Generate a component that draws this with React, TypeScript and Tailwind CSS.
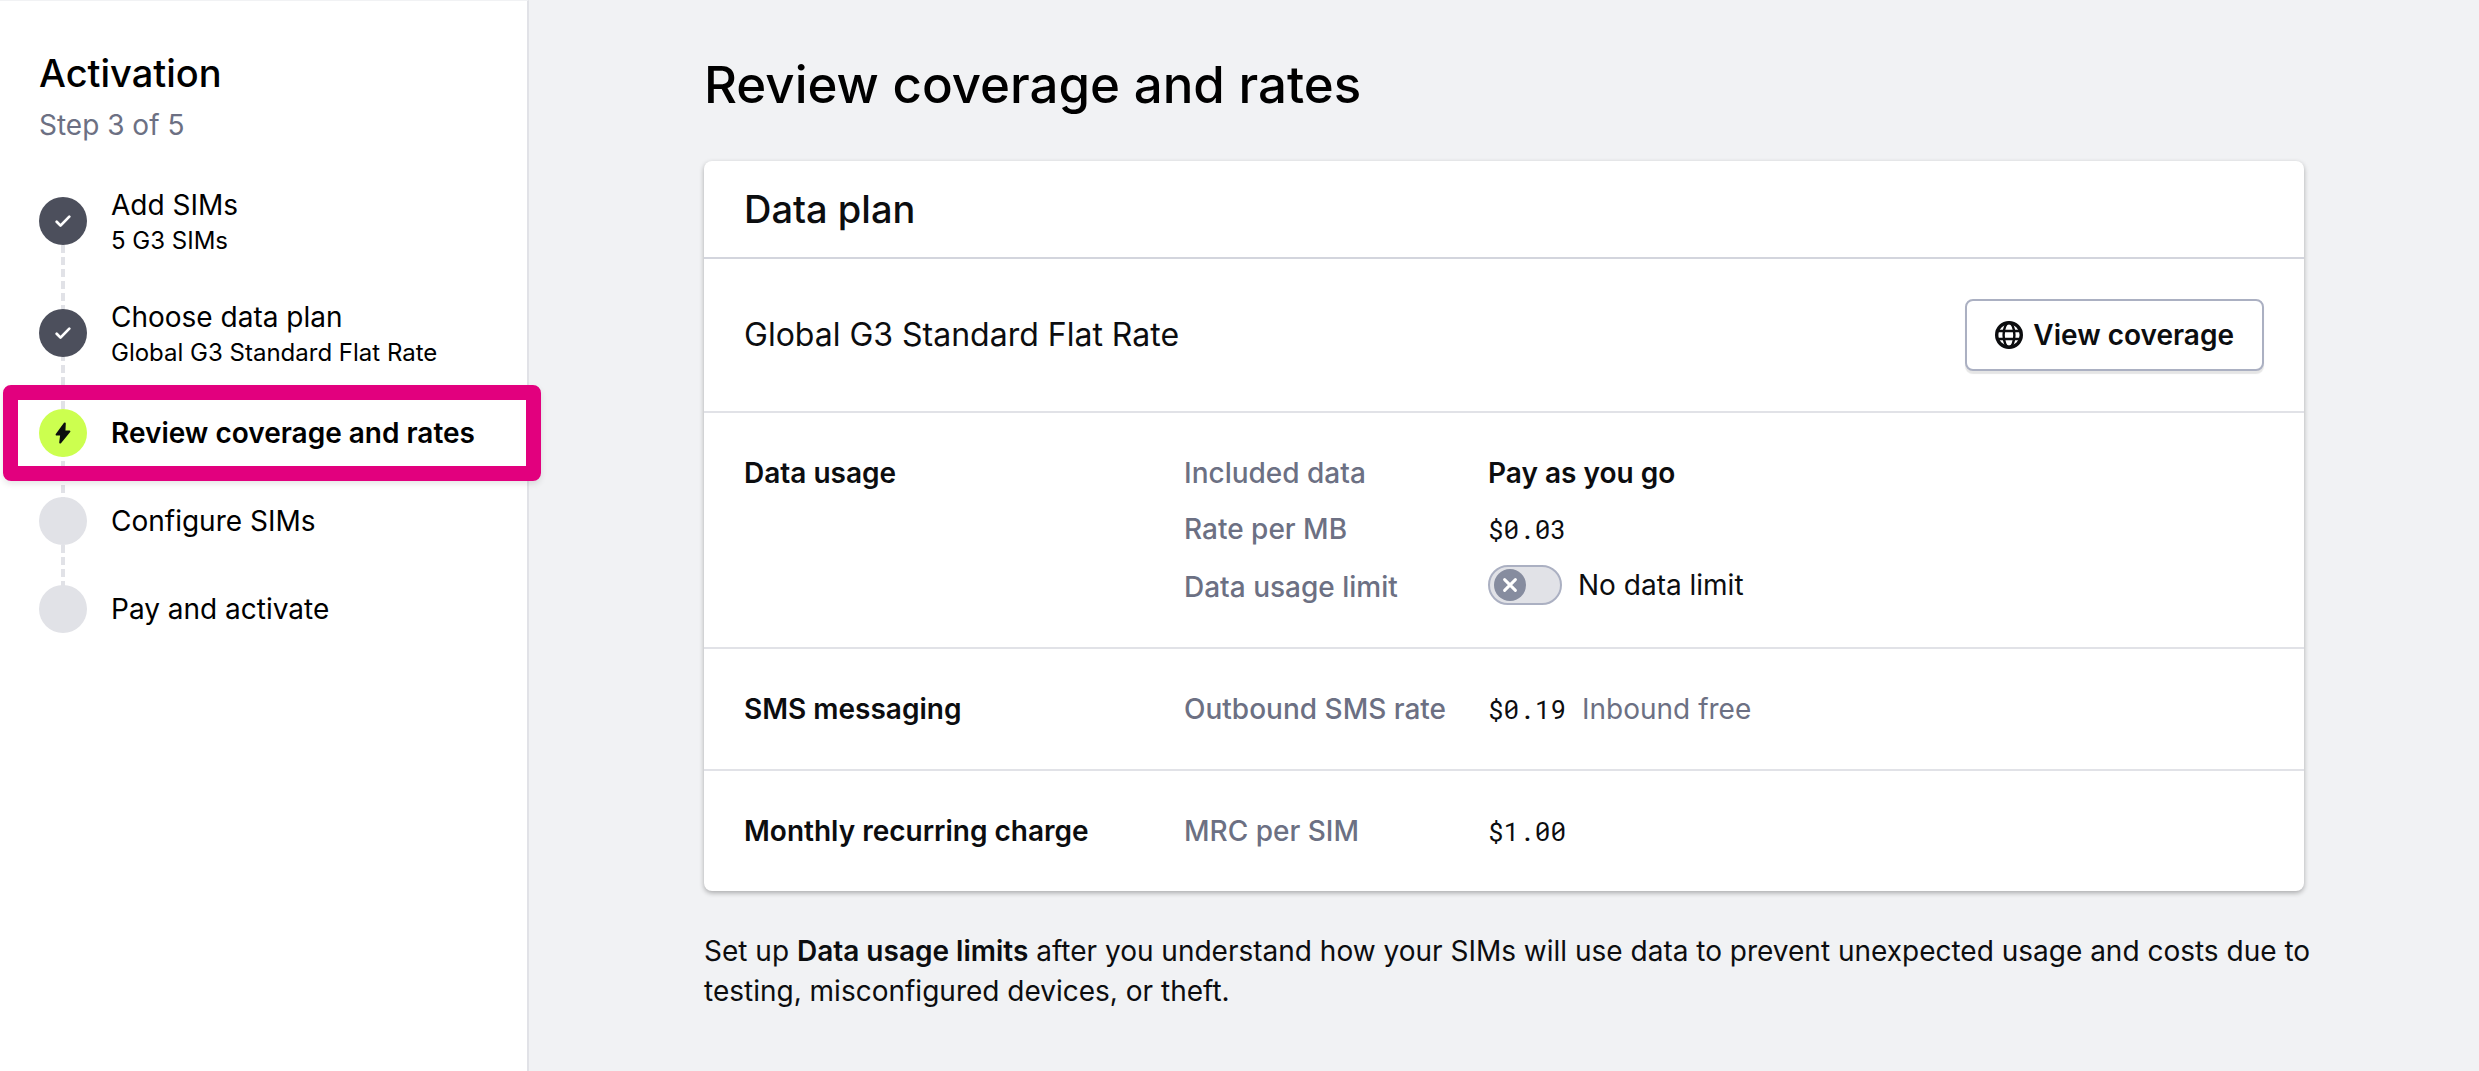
import React from "react";

type StepState = "done" | "current" | "upcoming";

type Step = {
  title: string;
  detail?: string;
  state: StepState;
};

const steps: Step[] = [
  { title: "Add SIMs", detail: "5 G3 SIMs", state: "done" },
  { title: "Choose data plan", detail: "Global G3 Standard Flat Rate", state: "done" },
  { title: "Review coverage and rates", state: "current" },
  { title: "Configure SIMs", state: "upcoming" },
  { title: "Pay and activate", state: "upcoming" },
];

function CheckIcon() {
  return (
    <svg viewBox="0 0 16 16" className="size-4" fill="none" stroke="currentColor" strokeWidth="2.7" strokeLinecap="round" strokeLinejoin="round" aria-hidden="true">
      <path d="M1.7 8.8 5.5 12.6 14.3 3.6" />
    </svg>
  );
}

function BoltIcon() {
  return (
    <svg viewBox="0 0 16 24" className="h-6 w-4" fill="currentColor" stroke="currentColor" strokeWidth="2" strokeLinejoin="round" aria-hidden="true">
      <path d="M9.8 2.4 1.6 13.6H6.2L5.2 21.6 14.4 10.4H9.4Z" />
    </svg>
  );
}

function GlobeIcon() {
  return (
    <svg viewBox="0 0 28 28" className="size-7" fill="none" stroke="currentColor" aria-hidden="true">
      <circle cx="14" cy="14" r="12.3" strokeWidth="3.4" />
      <ellipse cx="14" cy="14" rx="5.4" ry="12.3" strokeWidth="2.4" />
      <path d="M2.5 10H25.5M2.5 18H25.5" strokeWidth="2.4" />
    </svg>
  );
}

function StepMarker({ state }: { state: StepState }) {
  if (state === "done") {
    return (
      <span className="flex size-12 shrink-0 items-center justify-center rounded-full bg-[#4c4f5c] text-white">
        <CheckIcon />
      </span>
    );
  }
  if (state === "current") {
    return (
      <span className="flex size-12 shrink-0 items-center justify-center rounded-full bg-[#ccff4f] text-[#0c0d0f]">
        <BoltIcon />
      </span>
    );
  }
  return <span className="size-12 shrink-0 rounded-full bg-[#e1e2e7]" />;
}

function StepItem({ step }: { step: Step }) {
  const current = step.state === "current";
  return (
    <li
      aria-current={current ? "step" : undefined}
      className={step.detail ? "relative flex h-20 items-center gap-6" : "relative flex h-14 items-center gap-6"}
    >
      <StepMarker state={step.state} />
      <div className="whitespace-nowrap">
        <div className={current ? "text-[28px] leading-10 font-semibold" : "text-[28px] leading-10"}>{step.title}</div>
        {step.detail && <div className="text-2xl leading-8">{step.detail}</div>}
      </div>
      {current && (
        <div className="pointer-events-none absolute -inset-y-5 -right-[53px] -left-9 rounded-lg border-[15px] border-[#e2007e] shadow-[0_3px_6px_rgba(0,0,0,0.1)]" />
      )}
    </li>
  );
}

function Sidebar() {
  return (
    <aside className="w-[529px] shrink-0 border-t border-r-2 border-t-[#f1f2f4] border-r-[#e1e2e7] bg-white px-[39px] pt-12 text-black">
      <h2 className="text-[38px] leading-[48px] font-medium">Activation</h2>
      <p className="mt-2 text-[28px] leading-10 text-[#6c7083]">Step 3 of 5</p>
      <div className="relative mt-9">
        <div className="absolute top-10 bottom-7 left-[22px] w-1 bg-[repeating-linear-gradient(to_bottom,#e1e2e7_0px,#e1e2e7_8px,transparent_8px,transparent_12px)]" />
        <ol className="relative flex flex-col gap-8">
          {steps.map((step) => (
            <StepItem key={step.title} step={step} />
          ))}
        </ol>
      </div>
    </aside>
  );
}

function Field({ label, children }: { label: string; children: React.ReactNode }) {
  return (
    <>
      <dt className="flex items-end font-medium text-[#6c7083]">{label}</dt>
      <dd className="flex items-start">{children}</dd>
    </>
  );
}

function Section({ title, children }: { title: string; children: React.ReactNode }) {
  return (
    <section className="grid grid-cols-[440px_1fr] border-t-2 border-[#e1e2e7] p-10 text-[28px] leading-10">
      <h3 className="font-semibold">{title}</h3>
      <dl className="grid grid-cols-[304px_1fr] gap-y-4">{children}</dl>
    </section>
  );
}

function Price({ children }: { children: React.ReactNode }) {
  return <span className="font-['Roboto_Mono','Liberation_Mono',monospace] text-[26px]">{children}</span>;
}

function LimitToggle() {
  const [limited, setLimited] = React.useState(false);
  return (
    <label className="flex h-[42px] items-start gap-4">
      <span className="relative flex h-10 w-[74px]">
        <input
          type="checkbox"
          role="switch"
          checked={limited}
          onChange={(e) => setLimited(e.target.checked)}
          className="h-10 w-[74px] appearance-none rounded-full border-2 border-[#abb0c2] bg-[#e1e2e7]"
        />
        <span className="pointer-events-none absolute top-1 left-1.5 flex size-8 items-center justify-center rounded-full bg-[#868c9f] text-white">
          <svg viewBox="0 0 16 16" className="size-4" fill="none" stroke="currentColor" strokeWidth="3" strokeLinecap="round" aria-hidden="true">
            <path d="M2.6 2.6 13.4 13.4M13.4 2.6 2.6 13.4" />
          </svg>
        </span>
      </span>
      <span>No data limit</span>
    </label>
  );
}

export default function App() {
  return (
    <div className="flex min-h-screen bg-[#f1f2f4] font-['Inter',sans-serif] text-[#0c0d0f]">
      <Sidebar />
      <main className="min-w-0 flex-1 px-10 pt-[53px] pb-10">
        <div className="mx-auto max-w-[1600px]">
          <h1 className="text-[51px] leading-[64px] font-medium text-black">Review coverage and rates</h1>
          <div className="mt-11 rounded-lg bg-white shadow-[0_2px_5px_rgba(0,0,0,0.3)]">
            <h2 className="px-10 py-6 text-[38px] leading-[48px] font-medium">Data plan</h2>
            <div className="flex items-center justify-between border-t-2 border-[#d3d5dd] px-10 py-10">
              <p className="text-[32px] leading-10">Global G3 Standard Flat Rate</p>
              <button
                type="button"
                className="flex h-[72px] items-center gap-2.5 rounded-lg border-2 border-[#abb0c2] bg-white px-7 text-[28px] font-semibold shadow-[0_3px_1px_rgba(0,0,0,0.1)]"
              >
                <GlobeIcon />
                View coverage
              </button>
            </div>
            <Section title="Data usage">
              <Field label="Included data">
                <span className="font-semibold">Pay as you go</span>
              </Field>
              <Field label="Rate per MB">
                <Price>$0.03</Price>
              </Field>
              <Field label="Data usage limit">
                <LimitToggle />
              </Field>
            </Section>
            <Section title="SMS messaging">
              <Field label="Outbound SMS rate">
                <Price>$0.19</Price>
                <span className="ml-4 text-[#6c7083]">Inbound free</span>
              </Field>
            </Section>
            <Section title="Monthly recurring charge">
              <Field label="MRC per SIM">
                <Price>$1.00</Price>
              </Field>
            </Section>
          </div>
          <p className="-mr-6 mt-10 text-[28px] leading-10">
            Set up <strong className="font-semibold">Data usage limits</strong> after you understand how your SIMs will use
            data to prevent unexpected usage and costs due to testing, misconfigured devices, or theft.
          </p>
        </div>
      </main>
    </div>
  );
}
